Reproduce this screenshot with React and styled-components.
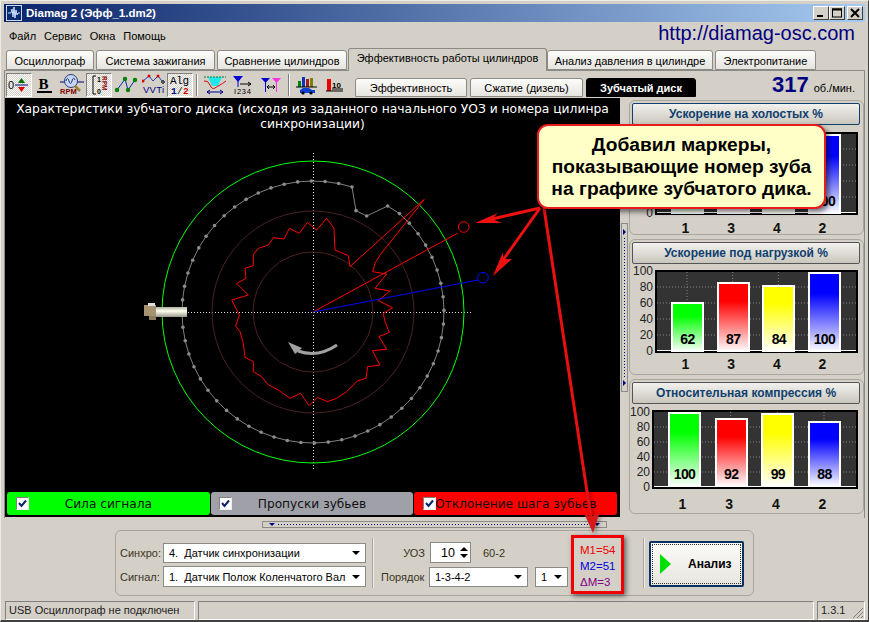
import React from 'react';
import styled, { createGlobalStyle } from 'styled-components';

const GlobalStyle = createGlobalStyle`
  html, body { margin: 0; padding: 0; background: #d4d0c8; }
  * { box-sizing: border-box; }
`;

const UI_FONT = '"Liberation Sans", Arial, sans-serif';
const WIDE_FONT = '"DejaVu Sans", Verdana, sans-serif';

const Window = styled.div`
  position: relative;
  width: 869px;
  height: 622px;
  overflow: hidden;
  display: flex;
  flex-direction: column;
  padding: 4px 4px 0;
  background: #d4d0c8;
  font-family: ${UI_FONT};
  font-size: 11px;
  color: #000;
  border-top: 1px solid #eeece6;
  border-left: 1px solid #eeece6;
  border-right: 1px solid #404040;
  border-bottom: 2px solid #404040;
`;

const TitleBar = styled.div`
  height: 18px;
  margin-top: -1px;
  margin-left: -1px;
  margin-right: -1px;
  flex: none;
  display: flex;
  align-items: center;
  padding: 0 2px;
  gap: 4px;
  background: linear-gradient(90deg, #0a246a 0%, #a6caf0 100%);
  color: #fff;
  font-weight: bold;
  font-size: 11.5px;
`;

const TitleText = styled.span`
  flex: 1;
`;

const WinButtons = styled.div`
  display: flex;
`;

const WinButton = styled.div`
  width: 16px;
  height: 14px;
  margin-left: ${p => p.$gap || 0}px;
  background: #d4d0c8;
  border: 1px solid;
  border-color: #fff #404040 #404040 #fff;
  display: flex;
  align-items: center;
  justify-content: center;
`;

const MenuRow = styled.div`
  height: 26px;
  flex: none;
  display: flex;
  align-items: center;
  padding: 2px 9px 0 4px;
`;

const MenuItem = styled.span`
  margin-right: 8px;
`;

const Url = styled.span`
  margin-left: auto;
  font-size: 20px;
  color: #000080;
  margin-top: -6px;
`;

const TabStrip = styled.div`
  height: 22px;
  flex: none;
  display: flex;
  align-items: flex-end;
  padding-left: 1px;
  gap: 2px;
  position: relative;
  z-index: 1;
`;

const Tab = styled.div`
  width: ${p => p.$w}px;
  height: ${p => (p.$active ? 23 : 20)}px;
  margin-bottom: ${p => (p.$active ? -1 : 0)}px;
  margin-left: ${p => p.$ml || 0}px;
  padding-top: ${p => (p.$active ? 3 : 4)}px;
  text-align: center;
  background: ${p => (p.$active ? '#d4d0c8' : 'linear-gradient(180deg, #fdfdfb 0%, #e6e4df 100%)')};
  border: 1px solid #8c8a84;
  border-bottom: ${p => (p.$active ? 'none' : '1px solid #8c8a84')};
  border-radius: 3px 3px 0 0;
`;

const TabPage = styled.div`
  flex: none;
  height: 448px;
  margin: 0 -1px 0 -1px;
  border: 1px solid #8c8a84;
  border-bottom: none;
  padding-top: 1px;
  display: flex;
  flex-direction: column;
`;

const TopRow = styled.div`
  height: 26px;
  flex: none;
  display: flex;
  align-items: flex-start;
`;

const Toolbar = styled.div`
  width: 346px;
  height: 25px;
  display: flex;
  align-items: center;
  padding-left: 1px;
`;

const ToolButton = styled.div`
  width: ${p => p.$w || 26}px;
  height: 24px;
  flex: none;
  display: flex;
  align-items: center;
  justify-content: center;
  border: 1px solid ${p => (p.$checked ? '#8a8880' : 'transparent')};
  border-color: ${p => (p.$checked ? '#808080 #fff #fff #808080' : 'transparent')};
  background: ${p => (p.$checked ? 'repeating-conic-gradient(#fff 0 25%, #d4d0c8 0 50%) 0 0 / 2px 2px' : 'transparent')};
`;

const ToolSep = styled.div`
  width: 2px;
  height: 22px;
  flex: none;
  margin: 0 3px 0 3px;
  border-left: 1px solid #808080;
  border-right: 1px solid #fff;
`;

const SubTabs = styled.div`
  width: 352px;
  height: 25px;
  display: flex;
  align-items: flex-end;
  gap: 3px;
  padding-left: 4px;
`;

const SubTab = styled.div`
  width: ${p => p.$w}px;
  height: 19px;
  padding-top: 3px;
  text-align: center;
  border: 1px solid ${p => (p.$dark ? '#000' : '#8c8a84')};
  border-radius: 3px 3px 0 0;
  font-weight: ${p => (p.$dark ? 'bold' : 'normal')};
  color: ${p => (p.$dark ? '#fff' : '#000')};
  background: ${p => (p.$dark ? '#000' : 'linear-gradient(180deg, #fdfdfb 0%, #e6e4df 100%)')};
`;

const Rpm = styled.div`
  flex: 1;
  display: flex;
  align-items: baseline;
  justify-content: flex-end;
  padding-right: 9px;
  gap: 5px;
`;

const RpmValue = styled.span`
  font-size: 22px;
  font-weight: bold;
  color: #000080;
  line-height: 25px;
`;

const RpmUnit = styled.span`
  font-size: 11px;
`;

const MainRow = styled.div`
  flex: 1;
  display: flex;
  min-height: 0;
`;

const PlotArea = styled.div`
  width: 615px;
  height: 419px;
  background: #000;
  display: flex;
  flex-direction: column;
  flex: none;
`;

const PlotTitle = styled.div`
  height: 35px;
  flex: none;
  padding: 4px 5px 0;
  color: #fff;
  text-align: center;
  font-family: ${WIDE_FONT};
  font-size: 12.3px;
  line-height: 15px;
`;

const DiskSvg = styled.svg`
  display: block;
  width: 615px;
  height: 358px;
  flex: none;
`;

const Legend = styled.div`
  flex: 1;
  display: flex;
  gap: 1px;
  padding: 1px 3px 2px 2px;
`;

const LegendItem = styled.div`
  position: relative;
  flex: 1;
  border-radius: 3px;
  background: ${p => p.$bg};
  display: flex;
  align-items: center;
  justify-content: center;
  font-family: ${WIDE_FONT};
  font-size: 12.2px;
  color: #111;
`;

const Check = styled.span`
  position: absolute;
  left: ${p => p.$left}px;
  top: 5px;
  width: 13px;
  height: 13px;
  background: #fff;
  border: 1px solid;
  border-color: #808080 #eee #eee #808080;
  display: flex;
  align-items: center;
  justify-content: center;
`;

const VSplit = styled.div`
  width: 7px;
  height: 169px;
  margin: 125px 0 0 1px;
  flex: none;
  border: 1px solid #8c8a84;
  display: flex;
  flex-direction: column;
  justify-content: space-between;
  align-items: center;
  padding: 5px 0;
  background: #d4d0c8;
`;

const VDots = styled.div`
  flex: 1;
  width: 1px;
  margin: 3px 0;
  background: repeating-linear-gradient(180deg, #000080 0 1px, transparent 1px 3px);
`;

const ArrowRight = styled.span`
  width: 0;
  height: 0;
  border-top: 3px solid transparent;
  border-bottom: 3px solid transparent;
  border-left: 3px solid #000080;
`;

const RightColumn = styled.div`
  flex: 1;
  display: flex;
  flex-direction: column;
  gap: 4px;
  padding: 2px 0 0 1px;
  min-width: 0;
`;

const ChartPanel = styled.div`
  height: ${p => p.$h}px;
  flex: none;
  border: 1px solid #a8a69e;
  border-radius: 6px;
  padding: 2px 3px 0 2px;
`;

const ChartHead = styled.div`
  height: 22px;
  border: 1px solid ${p => (p.$blue ? '#10406e' : '#555')};
  border-radius: 2px;
  background: linear-gradient(180deg, #f2f1ed 0%, #c9c6bd 100%);
  text-align: center;
  font-weight: bold;
  font-size: 12px;
  line-height: 20px;
  color: #10406e;
`;

const ChartBody = styled.div`
  display: flex;
  align-items: flex-start;
  margin-top: ${p => p.$top}px;
`;

const YAxis = styled.div`
  width: ${p => p.$w}px;
  height: ${p => p.$h}px;
  margin-top: ${p => p.$top}px;
  flex: none;
  display: flex;
  flex-direction: column;
  justify-content: space-between;
  align-items: flex-end;
  padding-right: 2px;
  font-size: 12px;
  line-height: 14px;
  color: #222;
`;

const Plot = styled.div`
  position: relative;
  width: ${p => p.$w}px;
  height: ${p => p.$h}px;
  flex: none;
  background: #333;
  border: 2px solid #000;
  display: grid;
  grid-template-columns: repeat(4, 33px);
  column-gap: ${p => p.$gap}px;
  padding-left: 14px;
  align-items: end;
`;

const PlotGrid = styled.svg`
  position: absolute;
  left: 0;
  top: 0;
  width: 100%;
  height: 100%;
`;

const BaseLine = styled.div`
  position: absolute;
  left: 0;
  right: 0;
  bottom: 0;
  height: 1px;
  background: #fff;
`;

const Bar = styled.div`
  position: relative;
  border: 2px solid #fff;
  border-bottom: none;
  background: linear-gradient(180deg, ${p => p.$color} 0%, ${p => p.$color} 25%, #fff 100%);
  display: flex;
  align-items: flex-end;
  justify-content: center;
  padding-bottom: 5px;
  font-weight: bold;
  font-size: 14px;
  letter-spacing: -0.6px;
`;

const XLabels = styled.div`
  display: grid;
  grid-template-columns: repeat(4, 33px);
  column-gap: ${p => p.$gap}px;
  margin-left: ${p => p.$left}px;
  margin-top: ${p => p.$top}px;
  font-weight: bold;
  font-size: 14px;
  line-height: 16px;
  text-align: center;
  color: #111;
`;

const HSplitRow = styled.div`
  height: 12px;
  flex: none;
  display: flex;
  justify-content: center;
  padding-top: 3px;
`;

const HSplit = styled.div`
  width: 345px;
  height: 7px;
  border: 1px solid #8c8a84;
  display: flex;
  align-items: center;
  justify-content: space-between;
  padding: 0 6px;
`;

const HDots = styled.div`
  flex: 1;
  height: 1px;
  margin: 0 3px;
  background: repeating-linear-gradient(90deg, #000080 0 1px, transparent 1px 3px);
`;

const ArrowDown = styled.span`
  width: 0;
  height: 0;
  border-left: 3px solid transparent;
  border-right: 3px solid transparent;
  border-top: 3px solid #000080;
`;

const ControlGroup = styled.div`
  width: 639px;
  height: 66px;
  flex: none;
  margin-left: 110px;
  border: 1px solid #a8a69e;
  border-radius: 6px;
  display: flex;
  align-items: center;
  padding-left: 4px;
`;

const SourceCol = styled.div`
  width: 246px;
  flex: none;
  display: flex;
  flex-direction: column;
  gap: 3px;
  margin-top: 4px;
`;

const FieldRow = styled.div`
  display: flex;
  align-items: center;
`;

const FieldLabel = styled.span`
  width: ${p => p.$w}px;
  flex: none;
  text-align: ${p => p.$align || 'left'};
  padding-right: ${p => (p.$align ? 5 : 0)}px;
  color: #3a3420;
`;

const SelectBox = styled.div`
  width: ${p => p.$w}px;
  height: ${p => p.$h || 21}px;
  margin-left: ${p => p.$ml || 0}px;
  flex: none;
  background: #fff;
  border: 1px solid #8c8a84;
  display: flex;
  align-items: center;
  padding: 0 5px;
  white-space: nowrap;
`;

const SelectText = styled.span`
  flex: 1;
  min-width: 0;
`;

const Caret = styled.span`
  width: 0;
  height: 0;
  flex: none;
  margin-left: 4px;
  border-left: 4px solid transparent;
  border-right: 4px solid transparent;
  border-top: 4px solid #000;
`;

const GroupDivider = styled.div`
  width: 2px;
  height: 50px;
  flex: none;
  margin: ${p => p.$margin};
  border-left: 1px solid #a8a69e;
  border-right: 1px solid #eeece6;
`;

const OptionsCol = styled.div`
  width: 187px;
  flex: none;
  display: flex;
  flex-direction: column;
  gap: 4px;
  margin-top: 3px;
`;

const SpinBox = styled.div`
  width: 41px;
  height: 21px;
  flex: none;
  background: #fff;
  border: 1px solid #8c8a84;
  display: flex;
  align-items: center;
  justify-content: flex-end;
  padding-right: 2px;
  gap: 5px;
  font-size: 12.5px;
`;

const SpinArrows = styled.span`
  display: flex;
  flex-direction: column;
  gap: 3px;
`;

const SpinUp = styled.span`
  width: 0;
  height: 0;
  border-left: 4px solid transparent;
  border-right: 4px solid transparent;
  border-bottom: 4px solid #000;
`;

const SpinDown = styled(SpinUp)`
  border-bottom: none;
  border-top: 4px solid #000;
`;

const HintText = styled.span`
  margin-left: 12px;
  color: #3a3420;
`;

const MarkerBox = styled.div`
  width: 53px;
  height: 59px;
  flex: none;
  margin: 3px 0 0 3px;
  border: 3px solid #f00000;
  box-shadow: 2px 2px 5px rgba(0, 0, 0, 0.55);
  padding: 2px 0 0 6px;
  display: flex;
  flex-direction: column;
  justify-content: center;
  line-height: 16px;
  font-size: 11.5px;
`;

const MarkerLine = styled.span`
  color: ${p => p.$color};
`;

const AnalyzeButton = styled.div`
  width: 95px;
  height: 46px;
  flex: none;
  margin-top: 2px;
  border: 2px solid #0a3260;
  border-radius: 2px;
  background: linear-gradient(180deg, #fbfbf9 0%, #e6e5df 100%);
  outline: 1px dotted #333;
  outline-offset: -4px;
  display: flex;
  align-items: center;
  padding-left: 9px;
  gap: 17px;
  font-weight: bold;
  font-size: 12px;
`;

const PlayIcon = styled.span`
  width: 0;
  height: 0;
  border-top: 10px solid transparent;
  border-bottom: 10px solid transparent;
  border-left: 11px solid #00e000;
`;

const StatusBar = styled.div`
  height: 19px;
  flex: none;
  margin-top: 5px;
  margin-right: -1px;
  display: flex;
  gap: 3px;
`;

const StatusCell = styled.div`
  width: ${p => p.$w}px;
  flex: ${p => (p.$grow ? 1 : 'none')};
  position: relative;
  border: 1px solid;
  border-color: #808080 #fff #fff #808080;
  padding: 2px 3px 0;
  color: #222;
`;

const Grip = styled.svg`
  position: absolute;
  right: 0;
  bottom: 0;
`;

const Callout = styled.div`
  position: absolute;
  left: 536px;
  top: 123px;
  width: 289px;
  height: 85px;
  border: 2px solid #e81c1c;
  border-radius: 11px;
  background: #ffffc8;
  box-shadow: 3px 3px 5px rgba(0, 0, 0, 0.5);
  display: flex;
  flex-direction: column;
  align-items: center;
  justify-content: center;
  font-weight: bold;
  font-size: 19.2px;
  line-height: 22px;
  color: #000;
`;

const ArrowsLayer = styled.svg`
  position: absolute;
  left: -1px;
  top: -1px;
  width: 869px;
  height: 622px;
  pointer-events: none;
  filter: drop-shadow(2px 2px 2px rgba(0, 0, 0, 0.35));
`;

const Y_TICKS = [100, 80, 60, 40, 20, 0];

// chart bars: value -> height from barH
const BarChart = ({ values, axisW, plotW, plotH, barH, gap, bodyTop, labelTop, labelLeft }) => {
  const colors = ['#00ff00', '#ff0000', '#ffff00', '#0000ff'];
  const names = ['1', '3', '4', '2'];
  const inner = plotH - 4;
  return (
    <>
      <ChartBody $top={bodyTop}>
        <YAxis $w={axisW} $h={barH + 14} $top={plotH - 2 - barH - 7}>
          {Y_TICKS.map(t => <span key={t}>{t}</span>)}
        </YAxis>
        <Plot $w={plotW} $h={plotH} $gap={gap}>
          <PlotGrid>
            {[0.2, 0.4, 0.6, 0.8].map(f => (
              <line key={f} x1="0" x2={plotW} y1={inner - barH * f} y2={inner - barH * f} stroke="#888" strokeDasharray="1 2" />
            ))}
            {[0, 1, 2, 3].map(i => (
              <line key={i} x1={14 + 16 + i * (33 + gap)} x2={14 + 16 + i * (33 + gap)} y1="0" y2={inner} stroke="#888" strokeDasharray="1 2" />
            ))}
          </PlotGrid>
          {values.map((v, i) => (
            <Bar key={names[i]} $color={colors[i]} style={{ height: Math.round((barH * v) / 100) }}>{v}</Bar>
          ))}
          <BaseLine />
        </Plot>
      </ChartBody>
      <XLabels $gap={gap} $left={labelLeft} $top={labelTop}>
        {names.map(n => <span key={n}>{n}</span>)}
      </XLabels>
    </>
  );
};

// zoom coords of the reference crop -> page coords
const CX = 313;
const CY = 312;
const z = ([x, y]) => [130 + x / 3, 140 + y / 3];
const pts = list => list.map(p => z(p).join(',')).join(' ');

const RED_TRACE = [[660,380],[883,178],[750,345],[735,370],[728,395],[770,402],[735,445],[780,453],[745,482],[788,503],[760,520],[765,545],[778,577],[747,590],[770,628],[727,632],[750,675],[713,680],[708,715],[683,722],[650,755],[620,775],[592,785],[562,772],[537,797],[512,760],[480,775],[445,750],[413,733],[395,710],[370,695],[370,665],[345,652],[340,610],[330,575],[317,558],[328,525],[305,480],[355,465],[320,430],[348,415],[345,385],[370,377],[370,343],[385,325],[415,315],[430,293],[462,297],[478,265],[508,280],[532,247],[560,270],[590,235],[612,265],[615,330],[655,347],[660,380]];

const teeth = [];
for (let k = 0; k <= 56; k++) {
  const a = ((17.3 - 6 * k) * Math.PI) / 180;
  teeth.push([CX + 131 * Math.sin(a), CY - 131 * Math.cos(a)]);
}
const gapPoints = [[773,198],[710,228],[678,212]].map(z);
const toothLine = [...teeth, ...gapPoints, teeth[0]].map(p => p.join(',')).join(' ');

const Disk = () => (
  <DiskSvg viewBox="5 133 615 358">
    <line x1={CX + 0.5} x2={CX + 0.5} y1="153" y2="471" stroke="#ddd" strokeDasharray="1 2" />
    <line x1="188" x2="471" y1={CY + 0.5} y2={CY + 0.5} stroke="#ddd" strokeDasharray="1 2" />
    <circle cx={CX} cy={CY} r="151" fill="none" stroke="#00ff00" />
    <circle cx={CX} cy={CY} r="101" fill="none" stroke="#4a2222" />
    <circle cx={CX} cy={CY} r="60" fill="none" stroke="#4a2222" />
    <polyline points={toothLine} fill="none" stroke="#808080" />
    {[...teeth, ...gapPoints].map(([x, y], i) => <circle key={i} cx={x} cy={y} r="1.8" fill="#8c8c8c" />)}
    <polyline points={pts(RED_TRACE)} fill="none" stroke="#ff0000" />
    <line x1={CX} y1={CY} x2={458} y2={233} stroke="#ff0000" />
    <circle cx="463.7" cy="227" r="5.3" fill="none" stroke="#ff0000" />
    <line x1={CX} y1={CY} x2={478} y2={280} stroke="#0000ff" />
    <circle cx="483" cy="277.7" r="5.3" fill="none" stroke="#0000ff" />
    <path d="M337 345 Q 318 358 298 351" fill="none" stroke="#a0a0a0" strokeWidth="3" />
    <polygon points="288,342 302,348 295,354" fill="#a0a0a0" />
    <rect x="144" y="305" width="12" height="11" fill="#a59270" />
    <rect x="148" y="303" width="7" height="3" fill="#ddd" />
    <rect x="149" y="316" width="7" height="4" fill="#8d7c60" />
    <defs>
      <linearGradient id="boltBody" x1="0" x2="0" y1="0" y2="1">
        <stop offset="0" stopColor="#b0b0a0" />
        <stop offset="0.4" stopColor="#fffff0" />
        <stop offset="1" stopColor="#9a9a90" />
      </linearGradient>
    </defs>
    <rect x="156" y="307" width="31" height="10" fill="url(#boltBody)" />
  </DiskSvg>
);

const CheckMark = () => (
  <svg width="9" height="9" viewBox="0 0 9 9"><path d="M1 4 L3.5 7 L8 1.5" fill="none" stroke="#0a246a" strokeWidth="2" /></svg>
);

const iconText = { fontFamily: '"Liberation Sans", sans-serif' };

const toolIcons = [
  <svg width="22" height="20" viewBox="0 0 22 20" style={iconText}>
    <text x="0" y="14" fontSize="11" fill="#000">0</text>
    <line x1="7" x2="20" y1="10" y2="10" stroke="#000080" />
    <polygon points="13.5,3 10,8 17,8" fill="#007000" />
    <polygon points="13.5,17 10,12 17,12" fill="#e00000" />
  </svg>,
  <svg width="20" height="20" viewBox="0 0 20 20" style={{ fontFamily: '"Liberation Serif", serif' }}>
    <text x="3.5" y="14" fontSize="15" fontWeight="bold">B</text>
    <rect x="2" y="16" width="15" height="2" fill="#000" />
  </svg>,
  <svg width="24" height="24" viewBox="0 0 24 24" style={iconText}>
    <line x1="0" x2="24" y1="9" y2="9" stroke="#000080" />
    <circle cx="11" cy="8" r="6.5" fill="#c8d4f0" stroke="#204080" />
    <path d="M6 8 Q7.5 3 9 8 T12 8 T15 7" fill="none" stroke="#204080" />
    <line x1="15" y1="13" x2="20" y2="18" stroke="#a08030" strokeWidth="2.5" />
    <text x="0" y="21" fontSize="7.5" fontWeight="bold" fill="#800000">RPM</text>
  </svg>,
  <svg width="20" height="22" viewBox="0 0 20 22" style={iconText}>
    <path d="M7 2 H4 V20 H7" fill="none" stroke="#000" />
    <text x="8" y="8" fontSize="7" fontWeight="bold">1</text>
    <text x="8" y="20" fontSize="7" fontWeight="bold">0</text>
    <text x="13" y="2" fontSize="6.5" fontWeight="bold" fill="#900000" transform="rotate(90 13 2)">RPM</text>
  </svg>,
  <svg width="24" height="20" viewBox="0 0 24 20">
    <polyline points="3,15 11,4 14,15 21,5" fill="none" stroke="#0030a0" />
    {[[3, 15], [11, 4], [14, 15], [21, 5]].map(([x, y]) => <circle key={x} cx={x} cy={y} r="2.2" fill="#008000" />)}
  </svg>,
  <svg width="24" height="22" viewBox="0 0 24 22" style={iconText}>
    <polyline points="1,7 7,2 11,7 16,2 20,7" fill="none" stroke="#2040c0" />
    {[[1, 7], [7, 2], [16, 2]].map(([x, y]) => <circle key={x} cx={x} cy={y} r="1.5" fill="#e00000" />)}
    <circle cx="21" cy="8" r="1.3" fill="none" stroke="#000" />
    <text x="1" y="19" fontSize="9.5" fill="#000080" textLength="21">VVTi</text>
  </svg>,
  <svg width="20" height="22" viewBox="0 0 20 22" style={{ fontFamily: '"Liberation Mono", monospace' }}>
    <text x="0" y="10" fontSize="11" fill="#000" textLength="19">Alg</text>
    <text x="1" y="20" fontSize="9.5" fontWeight="bold" fill="#000080">1</text>
    <text x="7" y="20" fontSize="9.5" fill="#000">/</text>
    <text x="13" y="20" fontSize="9.5" fontWeight="bold" fill="#d00000">2</text>
  </svg>,
  <svg width="22" height="22" viewBox="0 0 22 22">
    <path d="M4 3 H18 L14 12 H8 Z" fill="#20e8e8" />
    <path d="M0 7 Q4 6 6 11 T11 14 T16 11 T22 7" fill="none" stroke="#e00000" />
    <path d="M0 3 H22" stroke="#008040" strokeDasharray="2 1" />
    <path d="M3 18 H19 M3 18 l3 -2 M3 18 l3 2 M19 18 l-3 -2 M19 18 l-3 2" stroke="#000080" fill="none" />
  </svg>,
  <svg width="22" height="20" viewBox="0 0 22 20" style={iconText}>
    <polygon points="1,1 11,1 6,7" fill="#0000d0" />
    <line x1="6" x2="6" y1="6" y2="12" stroke="#0000d0" />
    <path d="M8 9 H19 M19 9 l-3 -2 M19 9 l-3 2" stroke="#000" fill="none" />
    <text x="2" y="19" fontSize="7.5" textLength="17">I234</text>
  </svg>,
  <svg width="20" height="16" viewBox="0 0 20 16">
    <polygon points="0,1 9,1 4.5,6" fill="#0000d0" />
    <line x1="4.5" x2="4.5" y1="5" y2="15" stroke="#0000d0" />
    <polygon points="11,1 20,1 15.5,6" fill="#ff30e0" />
    <line x1="15.5" x2="15.5" y1="5" y2="15" stroke="#ff30e0" />
    <path d="M6 10 H14 M6 10 l2 -2 M6 10 l2 2 M14 10 l-2 -2 M14 10 l-2 2" stroke="#000" fill="none" />
  </svg>,
  <svg width="22" height="20" viewBox="0 0 22 20">
    <rect x="2" y="6" width="3" height="6" fill="#008000" />
    <rect x="6" y="2" width="3" height="10" fill="#1030c0" />
    <rect x="10" y="4" width="3" height="8" fill="#a02020" />
    <rect x="14" y="3" width="3" height="9" fill="#808000" />
    <line x1="0" x2="21" y1="12" y2="12" stroke="#000" />
    <path d="M4 18 V15 L7 13 H13 L16 15 H19 V18 Z" fill="#1040d0" />
    <circle cx="7" cy="18" r="1.6" fill="#000" />
    <circle cx="15" cy="18" r="1.6" fill="#000" />
  </svg>,
  <svg width="18" height="18" viewBox="0 0 18 18" style={iconText}>
    <rect x="1" y="3" width="4" height="12" fill="#e80000" />
    <text x="6" y="12" fontSize="8" fontWeight="bold">10</text>
    <line x1="0" x2="17" y1="15" y2="15" stroke="#000" />
    <line x1="6" x2="17" y1="13" y2="13" stroke="#000" />
  </svg>,
];

const FIRST_GROUP_WIDTHS = [26, 26, 28, 26, 28, 27, 26];

const App = () => (
  <>
    <GlobalStyle />
    <Window>
      <TitleBar>
        <svg width="16" height="16" viewBox="0 0 16 16">
          <rect x="0.5" y="0.5" width="15" height="15" fill="#0a2a70" stroke="#cfd6e8" />
          <path d="M2 8 H5 L6 4 L7 12 L8 2 L9 13 L10 5 L11 10 L12 8 H14" fill="none" stroke="#d0e0ff" />
        </svg>
        <TitleText>Diamag 2 (Эфф_1.dm2)</TitleText>
        <WinButtons>
          <WinButton>
            <svg width="10" height="10" viewBox="0 0 10 10"><rect x="1" y="7" width="6" height="2" fill="#000" /></svg>
          </WinButton>
          <WinButton>
            <svg width="10" height="10" viewBox="0 0 10 10"><rect x="0.5" y="1" width="9" height="8" fill="none" stroke="#000" /><rect x="0" y="0.5" width="10" height="2" fill="#000" /></svg>
          </WinButton>
          <WinButton $gap={2}>
            <svg width="10" height="10" viewBox="0 0 10 10"><path d="M1 1 L9 9 M9 1 L1 9" stroke="#000" strokeWidth="2" /></svg>
          </WinButton>
        </WinButtons>
      </TitleBar>

      <MenuRow>
        <MenuItem>Файл</MenuItem>
        <MenuItem>Сервис</MenuItem>
        <MenuItem>Окна</MenuItem>
        <MenuItem>Помощь</MenuItem>
        <Url>http://diamag-osc.com</Url>
      </MenuRow>

      <TabStrip>
        <Tab $w={88}>Осциллограф</Tab>
        <Tab $w={119}>Система зажигания</Tab>
        <Tab $w={130}>Сравнение цилиндров</Tab>
        <Tab $w={199} $active $ml={-1}>Эффективность работы цилиндров</Tab>
        <Tab $w={166} $ml={-2}>Анализ давления в цилиндре</Tab>
        <Tab $w={101}>Электропитание</Tab>
      </TabStrip>

      <TabPage>
        <TopRow>
          <Toolbar>
            {toolIcons.slice(0, 7).map((icon, i) => (
              <ToolButton key={i} $w={FIRST_GROUP_WIDTHS[i]} $checked={i === 0 || i === 3 || i === 6}>{icon}</ToolButton>
            ))}
            <ToolSep />
            {toolIcons.slice(7, 10).map((icon, i) => <ToolButton key={i} $w={28}>{icon}</ToolButton>)}
            <ToolSep />
            {toolIcons.slice(10).map((icon, i) => <ToolButton key={i} $w={28}>{icon}</ToolButton>)}
          </Toolbar>
          <SubTabs>
            <SubTab $w={112}>Эффективность</SubTab>
            <SubTab $w={113}>Сжатие (дизель)</SubTab>
            <SubTab $w={110} $dark>Зубчатый диск</SubTab>
          </SubTabs>
          <Rpm>
            <RpmValue>317</RpmValue>
            <RpmUnit>об./мин.</RpmUnit>
          </Rpm>
        </TopRow>

        <MainRow>
          <PlotArea>
            <PlotTitle>Характеристики зубчатого диска (исходя из заданного начального УОЗ и номера цилинра синхронизации)</PlotTitle>
            <Disk />
            <Legend>
              <LegendItem $bg="#00ff00"><Check $left={9}><CheckMark /></Check>Сила сигнала</LegendItem>
              <LegendItem $bg="#a0a0a8"><Check $left={8}><CheckMark /></Check>Пропуски зубьев</LegendItem>
              <LegendItem $bg="#ff0000"><Check $left={9}><CheckMark /></Check>Отклонение шага зубьев</LegendItem>
            </Legend>
          </PlotArea>
          <VSplit>
            <ArrowRight />
            <VDots />
            <ArrowRight />
          </VSplit>
          <RightColumn>
            <ChartPanel $h={135}>
              <ChartHead $blue>Ускорение на холостых %</ChartHead>
              <BarChart values={[62, 85, 80, 100]} axisW={23} plotW={203} plotH={83} barH={80} gap={12.67} bodyTop={7} labelTop={0} labelLeft={37} />
            </ChartPanel>
            <ChartPanel $h={136}>
              <ChartHead>Ускорение под нагрузкой %</ChartHead>
              <BarChart values={[62, 87, 84, 100]} axisW={23} plotW={203} plotH={83} barH={80} gap={12.67} bodyTop={6} labelTop={-2} labelLeft={37} />
            </ChartPanel>
            <ChartPanel $h={135}>
              <ChartHead>Относительная компрессия %</ChartHead>
              <BarChart values={[100, 92, 99, 88]} axisW={20} plotW={206} plotH={79} barH={75} gap={13.67} bodyTop={6} labelTop={2} labelLeft={34} />
            </ChartPanel>
          </RightColumn>
        </MainRow>
      </TabPage>

      <HSplitRow>
        <HSplit>
          <ArrowDown />
          <HDots />
          <ArrowDown />
        </HSplit>
      </HSplitRow>

      <ControlGroup>
        <SourceCol>
          <FieldRow>
            <FieldLabel $w={43}>Синхро:</FieldLabel>
            <SelectBox $w={203} $h={20}><SelectText>4.&nbsp; Датчик синхронизации</SelectText><Caret /></SelectBox>
          </FieldRow>
          <FieldRow>
            <FieldLabel $w={43}>Сигнал:</FieldLabel>
            <SelectBox $w={203}><SelectText>1.&nbsp; Датчик Полож Коленчатого Вал</SelectText><Caret /></SelectBox>
          </FieldRow>
        </SourceCol>
        <GroupDivider $margin="0 7px 0 6px" />
        <OptionsCol>
          <FieldRow>
            <FieldLabel $w={49} $align="right">УОЗ</FieldLabel>
            <SpinBox>
              10
              <SpinArrows><SpinUp /><SpinDown /></SpinArrows>
            </SpinBox>
            <HintText>60-2</HintText>
          </FieldRow>
          <FieldRow>
            <FieldLabel $w={48}>Порядок</FieldLabel>
            <SelectBox $w={99} $h={20}><SelectText>1-3-4-2</SelectText><Caret /></SelectBox>
            <SelectBox $w={33} $h={20} $ml={7}><SelectText>1</SelectText><Caret /></SelectBox>
          </FieldRow>
        </OptionsCol>
        <MarkerBox>
          <MarkerLine $color="#f00000">M1=54</MarkerLine>
          <MarkerLine $color="#0000e0">M2=51</MarkerLine>
          <MarkerLine $color="#800080">ΔM=3</MarkerLine>
        </MarkerBox>
        <GroupDivider $margin="0 4px 0 19px" />
        <AnalyzeButton><PlayIcon />Анализ</AnalyzeButton>
      </ControlGroup>

      <StatusBar>
        <StatusCell $w={190}>USB Осциллограф не подключен</StatusCell>
        <StatusCell $grow />
        <StatusCell $w={48}>
          1.3.1
          <Grip width="13" height="13" viewBox="0 0 13 13">
            <path d="M12 2 L2 12 M12 6 L6 12 M12 10 L10 12" stroke="#808080" fill="none" />
          </Grip>
        </StatusCell>
      </StatusBar>

      <ArrowsLayer viewBox="0 0 869 622">
        <line x1="540" y1="208" x2="492" y2="219" stroke="#f01010" strokeWidth="3" />
        <polygon points="475,223 498,213 492,219 502,223" fill="#f01010" />
        <line x1="540" y1="208" x2="503" y2="260" stroke="#f01010" strokeWidth="3" />
        <polygon points="493,276 503,252 503,259 512,259" fill="#f01010" />
        <line x1="544" y1="208" x2="591" y2="518" stroke="#e81010" strokeWidth="3" />
        <polygon points="593,533 584,513 591,517 600,511" fill="#d81818" />
      </ArrowsLayer>

      <Callout>
        <span>Добавил маркеры,</span>
        <span>показывающие номер зуба</span>
        <span>на графике зубчатого дика.</span>
      </Callout>
    </Window>
  </>
);

export default App;
